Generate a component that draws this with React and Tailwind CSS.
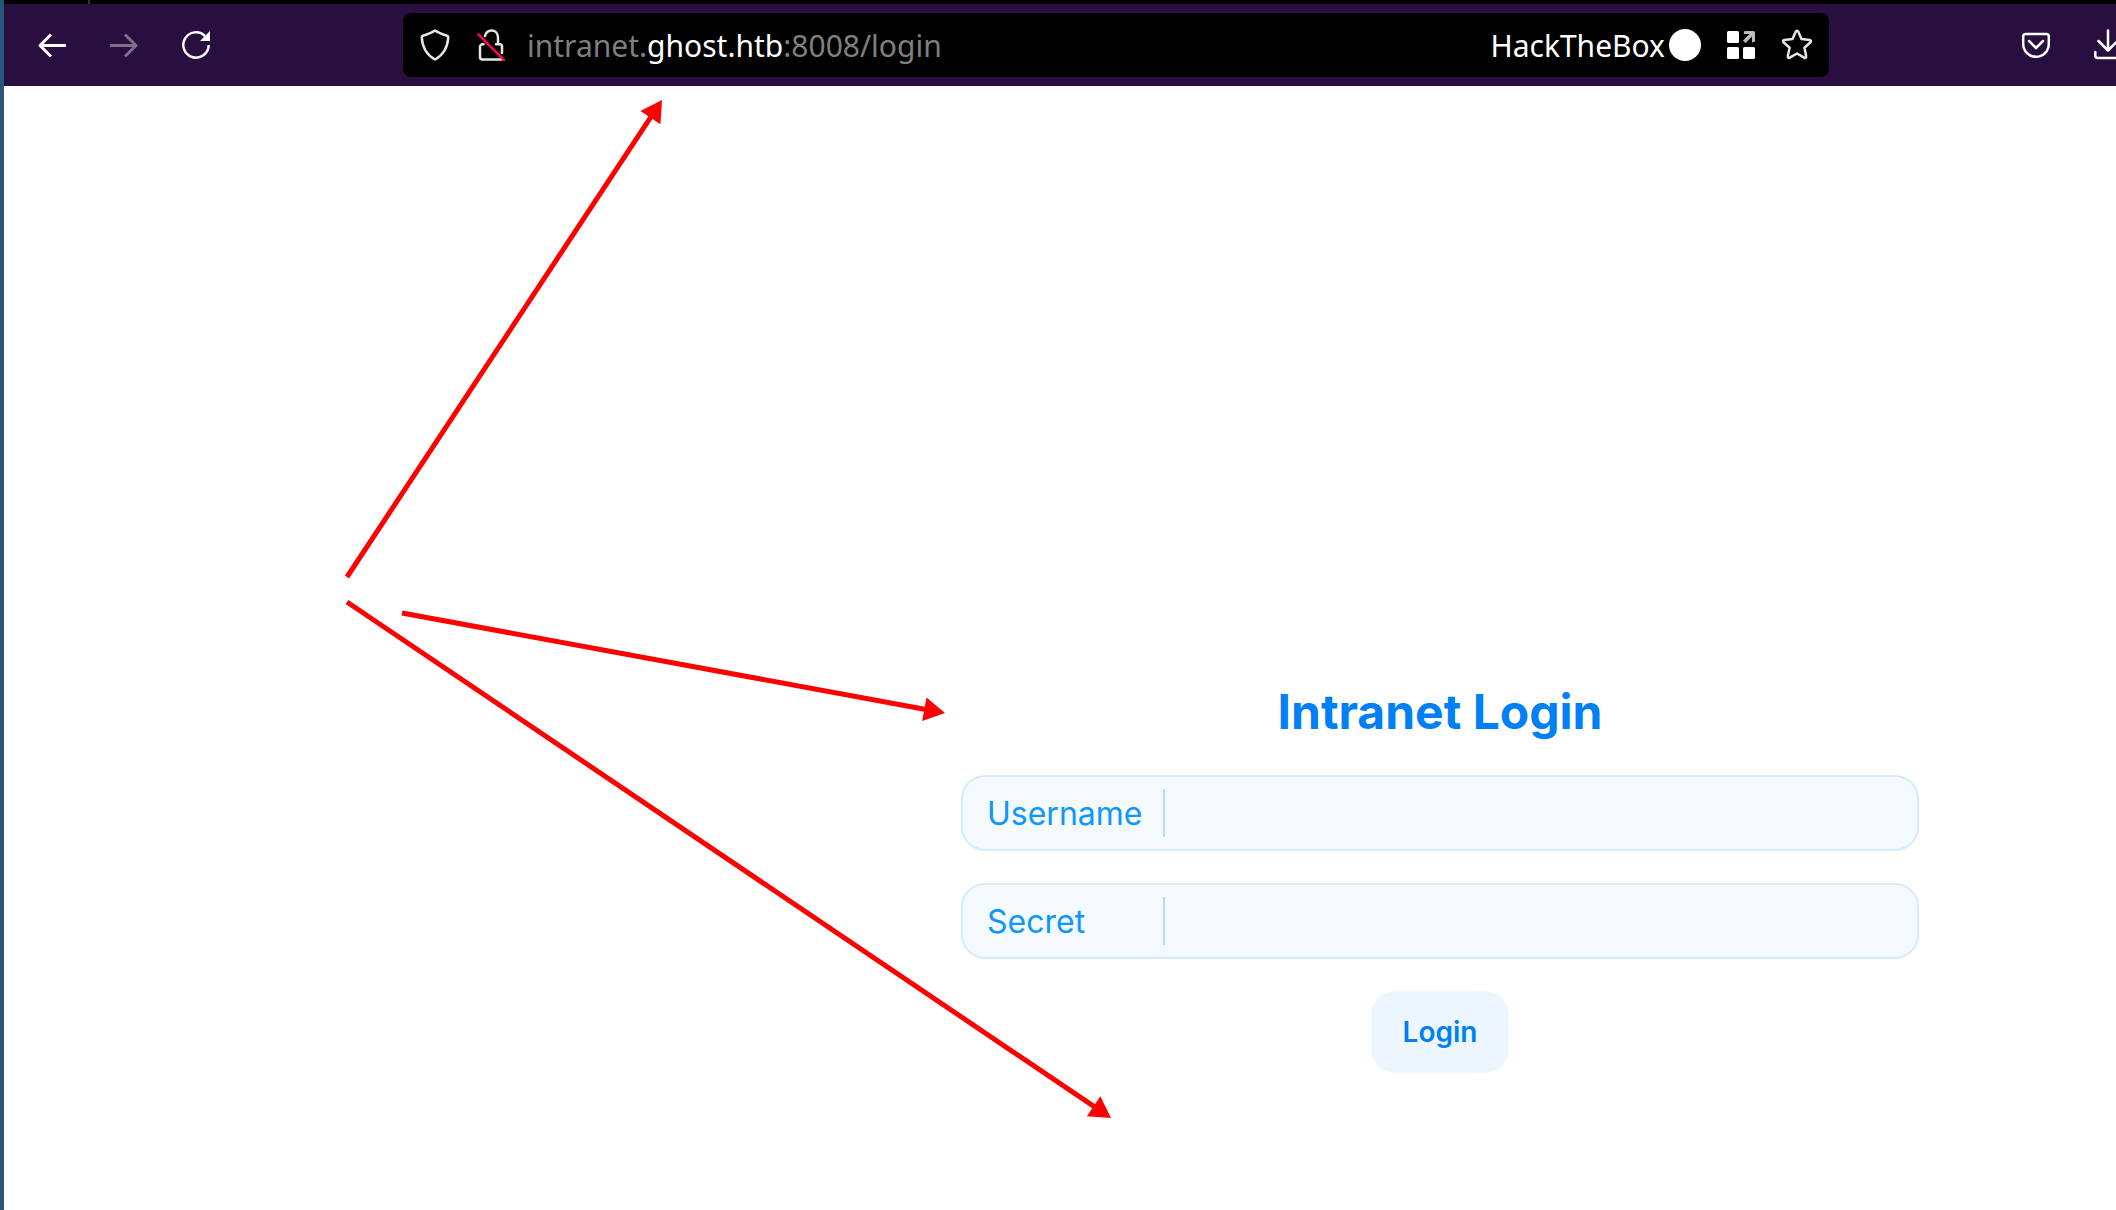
import { useState } from 'react';

const iconProps = {
  width: 32,
  height: 32,
  viewBox: '0 0 32 32',
  fill: 'none',
  stroke: 'currentColor',
  strokeWidth: 2.5,
  strokeLinecap: 'round',
  strokeLinejoin: 'round',
  'aria-hidden': true,
};

function BackIcon() {
  return (
    <svg {...iconProps} strokeWidth={3} strokeLinecap="butt">
      <path d="M30 16.500H4M15 5.500l-11 11 11 11" />
    </svg>
  );
}

function ForwardIcon() {
  return (
    <svg {...iconProps} strokeWidth={3} strokeLinecap="butt">
      <path d="M2 16.500h26M17 5.500l11 11-11 11" />
    </svg>
  );
}

function ReloadIcon() {
  return (
    <svg {...iconProps} strokeLinecap="butt">
      <path d="M28.7 16A12.7 12.7 0 1 1 25 7" />
      <path d="M30 2v10H20z" fill="currentColor" stroke="none" />
    </svg>
  );
}

function ShieldIcon() {
  return (
    <svg {...iconProps}>
      <path d="M16 1.5c4 2.700 8 4 12 5.200 1 .3 1.300 1 1.200 2C28.600 19 24 26 16 30.500 8 26 3.400 19 2.800 8.700c-.1-1 .2-1.700 1.200-2 4-1.200 8-2.500 12-5.200z" />
    </svg>
  );
}

function InsecureLockIcon() {
  return (
    <svg {...iconProps}>
      <path d="M10 7C11 3.500 13.500 1.500 16.500 1.500c4 0 6.500 3 6.500 7V15M21 15.300h4a2 2 0 0 1 2 2V24M8.500 15.300H7.500a2.500 2.500 0 0 0-2.500 2.500V28a2.500 2.500 0 0 0 2.500 2.500h19" />
      <path d="M3.500 5.500l25.500 25.500" stroke="#e8114b" />
    </svg>
  );
}

function ExtensionsIcon() {
  return (
    <svg {...iconProps} fill="currentColor" stroke="none">
      <rect x="2" y="2" width="12" height="12" rx="1.500" />
      <rect x="2" y="18" width="12" height="12" rx="1.500" />
      <rect x="18" y="18" width="12" height="12" rx="1.500" />
      <path
        d="M19.500 2H28.500A1.500 1.500 0 0 1 30 3.500V12.500L27 13.500V7.500L20.500 14L18 11.500L24.500 5H18.500z"
        fill="#bdbdbd"
      />
    </svg>
  );
}

function StarIcon() {
  return (
    <svg {...iconProps}>
      <path d="M14.800 2.500a1.300 1.300 0 0 1 2.400 0l3.300 7.500 8.300.9a1.300 1.300 0 0 1 .7 2.300L23.400 18.700l1.800 8.600a1.300 1.300 0 0 1-2 1.400L16 24.500l-7.200 4.200a1.300 1.300 0 0 1-2-1.400l1.800-8.600L2.500 13.200a1.300 1.300 0 0 1 .7-2.300l8.300-.9z" />
    </svg>
  );
}

function PocketIcon() {
  return (
    <svg {...iconProps}>
      <path d="M5.500 5h21a2.300 2.300 0 0 1 2.300 2.300V15a12.800 12.800 0 0 1-25.600 0V7.300A2.300 2.300 0 0 1 5.500 5z" />
      <path d="M9 12l7 7 7-7" />
    </svg>
  );
}

function DownloadIcon() {
  return (
    <svg {...iconProps}>
      <path d="M16 1.500V21M6.500 12l9.500 9.500 9.500-9.500M3.300 23v3.500a2.500 2.500 0 0 0 2.500 2.500h20.400a2.500 2.500 0 0 0 2.500-2.500V23" />
    </svg>
  );
}

function BrowserBar() {
  return (
    <header className="border-t-4 border-black bg-[#290f40] text-white">
      <nav className="flex h-[82px] items-center gap-10 overflow-hidden pl-8">
        <button type="button" aria-label="Back" className="shrink-0">
          <BackIcon />
        </button>
        <button
          type="button"
          aria-label="Forward"
          className="shrink-0 text-[#806f8c]"
          disabled
        >
          <ForwardIcon />
        </button>
        <button type="button" aria-label="Reload" className="shrink-0">
          <ReloadIcon />
        </button>
        <div className="mx-[151px] flex h-16 min-w-0 flex-1 items-center rounded-lg bg-black px-4 font-['Noto_Sans',sans-serif] text-[30px] leading-10">
          <button
            type="button"
            aria-label="Tracking protection"
            className="mr-6 shrink-0 text-[#e6e6e6]"
          >
            <ShieldIcon />
          </button>
          <button
            type="button"
            aria-label="Connection is not secure"
            className="mr-5 shrink-0 text-[#e6e6e6]"
          >
            <InsecureLockIcon />
          </button>
          <div
            role="textbox"
            aria-label="Address"
            tabIndex={0}
            className="min-w-0 flex-1 truncate pt-0.5 text-[#7f7f7f]"
          >
            intranet.<span className="text-white">ghost.htb</span>:8008/login
          </div>
          <button type="button" className="flex shrink-0 items-center gap-1">
            <span className="pt-0.5">HackTheBox</span>
            <span className="size-8 rounded-full bg-white" />
          </button>
          <button
            type="button"
            aria-label="Extensions"
            className="ml-6 shrink-0"
          >
            <ExtensionsIcon />
          </button>
          <button
            type="button"
            aria-label="Bookmark"
            className="ml-6 shrink-0 text-[#e6e6e6]"
          >
            <StarIcon />
          </button>
        </div>
        <button type="button" aria-label="Save to Pocket" className="shrink-0">
          <PocketIcon />
        </button>
        <button
          type="button"
          aria-label="Downloads"
          className="-mr-2 shrink-0"
        >
          <DownloadIcon />
        </button>
      </nav>
    </header>
  );
}

function Field({ id, label, type = 'text', value, onChange }) {
  return (
    <div className="flex h-[76px] items-center rounded-3xl border-2 border-[#d7eafa] bg-[#f5faff] px-6">
      <label
        htmlFor={id}
        className="w-[176px] shrink-0 pt-0.5 text-[32px] leading-10 text-[#1096ff]"
      >
        {label}
      </label>
      <input
        id={id}
        type={type}
        value={value}
        onChange={(e) => onChange(e.target.value)}
        className="h-12 min-w-0 flex-1 border-l-2 border-[#b5d9f8] bg-transparent pl-4 text-[32px] text-[#1096ff] outline-none"
      />
    </div>
  );
}

function LoginForm() {
  const [username, setUsername] = useState('');
  const [secret, setSecret] = useState('');

  return (
    <form
      className="flex w-full max-w-[958px] flex-col gap-8"
      onSubmit={(e) => e.preventDefault()}
    >
      <h1 className="pt-0.5 text-center text-5xl leading-[62px] font-bold text-[#0080f5]">
        Intranet Login
      </h1>
      <Field
        id="username"
        label="Username"
        value={username}
        onChange={setUsername}
      />
      <Field
        id="secret"
        label="Secret"
        type="password"
        value={secret}
        onChange={setSecret}
      />
      <button
        type="submit"
        className="self-center rounded-3xl bg-[#edf6ff] px-8 py-5 text-[28px] leading-[42px] font-semibold text-[#0080f5]"
      >
        Login
      </button>
    </form>
  );
}

const arrows = [
  { x1: 347, y1: 577, x2: 662, y2: 100 },
  { x1: 402, y1: 613, x2: 945, y2: 713 },
  { x1: 347, y1: 602, x2: 1111, y2: 1118 },
];

function Arrow({ x1, y1, x2, y2 }) {
  const angle = (Math.atan2(y2 - y1, x2 - x1) * 180) / Math.PI;
  const length = Math.hypot(x2 - x1, y2 - y1);
  return (
    <g transform={`translate(${x1} ${y1}) rotate(${angle})`}>
      <path d={`M0 0H${length - 18}`} stroke="#ff0000" strokeWidth="5" />
      <path d={`M${length} 0l-21 -12v24z`} fill="#ff0000" />
    </g>
  );
}

export default function App() {
  return (
    <div className="relative flex min-h-screen flex-col overflow-hidden border-l-4 border-[#2a5679] bg-white font-['Inter',sans-serif]">
      <BrowserBar />
      <main className="flex flex-1 justify-end pt-[593px] pr-[197px] pl-8">
        <LoginForm />
      </main>
      <svg
        className="pointer-events-none absolute top-0 -left-1"
        width="1200"
        height="1200"
        aria-hidden="true"
      >
        <path d="M89 0v4" stroke="#333333" strokeWidth="2" />
        {arrows.map((arrow) => (
          <Arrow key={arrow.y1} {...arrow} />
        ))}
      </svg>
    </div>
  );
}
